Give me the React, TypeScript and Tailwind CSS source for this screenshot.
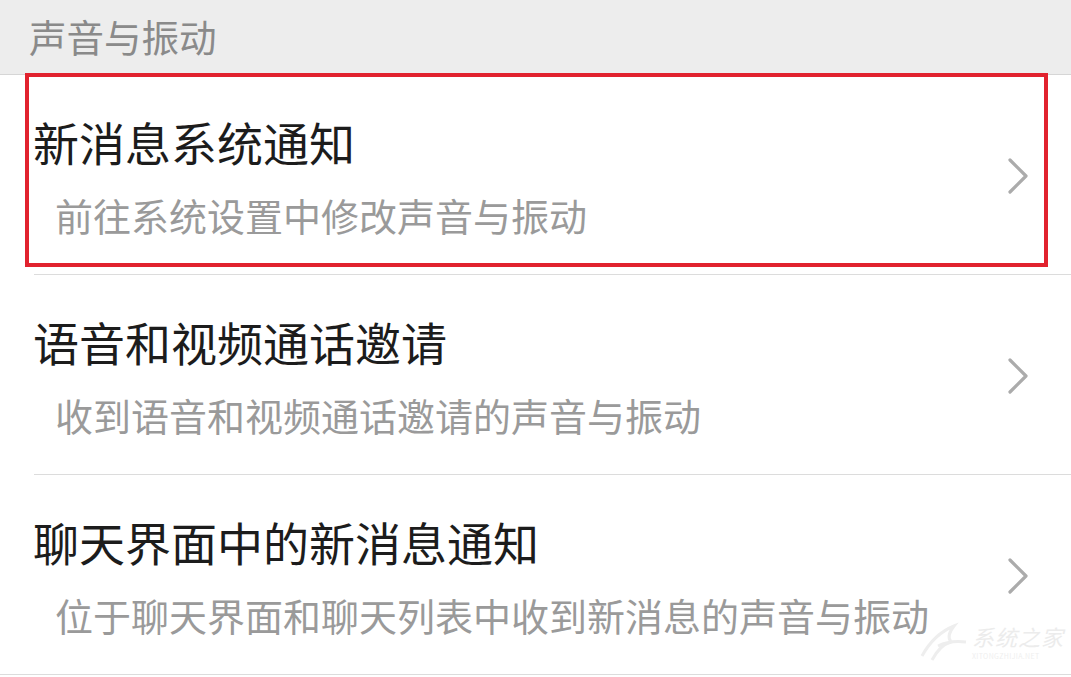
const items = [
  { title: "新消息系统通知", desc: "前往系统设置中修改声音与振动" },
  { title: "语音和视频通话邀请", desc: "收到语音和视频通话邀请的声音与振动" },
  { title: "聊天界面中的新消息通知", desc: "位于聊天界面和聊天列表中收到新消息的声音与振动" },
];

function Chevron() {
  return (
    <svg width="24" height="40" viewBox="0 0 24 40" className="shrink-0">
      <path d="M3 4 L19 20 L3 36" fill="none" stroke="#ababab" strokeWidth="3.2" strokeLinecap="round" strokeLinejoin="round" />
    </svg>
  );
}

export default function App() {
  return (
    <div
      className="relative w-[1071px] h-[677px] overflow-hidden bg-white"
      style={{ fontFamily: '"Noto Sans CJK SC", "Noto Sans", sans-serif' }}
    >
      <div className="h-[75px] bg-[#ededed] flex items-center pl-[29px] border-b border-[#d6d6d6]">
        <span className="text-[37.5px] leading-none text-[#8a8a8a] -mt-[2px]">声音与振动</span>
      </div>

      {items.map((item, i) => (
        <div key={item.title} className="relative h-[200px] flex items-center">
          <div className="flex-1 pl-[33px] pt-[2px]">
            <div className="w-fit text-[46px] leading-[56px] text-[#1c1c1c] whitespace-nowrap">{item.title}</div>
            <div className="w-fit mt-[22px] ml-[22px] text-[38px] leading-[48px] text-[#9a9a9a] whitespace-nowrap">{item.desc}</div>
          </div>
          <div className="pr-[40px] pt-[1px]">
            <Chevron />
          </div>
          <div
            className={
              i === items.length - 1
                ? "absolute bottom-0 left-0 right-0 h-px bg-[#dcdcdc]"
                : "absolute bottom-0 left-[34px] right-0 h-px bg-[#dcdcdc]"
            }
          />
        </div>
      ))}

      {/* highlight box */}
      <div className="absolute left-[25px] top-[73px] w-[1023px] h-[194px] border-[4px] border-[#e1222e]" />

      {/* watermark */}
      <div className="absolute left-[918px] top-[618px] flex items-end gap-[2px] pointer-events-none">
        <svg width="52" height="46" viewBox="0 0 52 46">
          <path d="M4 38 Q16 16 36 8 Q28 18 33 24 Q22 27 14 42" fill="none" stroke="#eeeeee" strokeWidth="3" />
          <path d="M20 28 Q32 22 48 24" fill="none" stroke="#eeeeee" strokeWidth="3" />
        </svg>
        <div className="flex flex-col items-start gap-[3px] mb-[4px]">
          <span className="text-[22px] leading-[26px] text-[#ececec] italic whitespace-nowrap tracking-[1px]">系统之家</span>
          <span className="text-[7px] leading-[8px] text-[#efefef] tracking-wider whitespace-nowrap">XITONGZHIJIA.NET</span>
        </div>
      </div>
    </div>
  );
}
